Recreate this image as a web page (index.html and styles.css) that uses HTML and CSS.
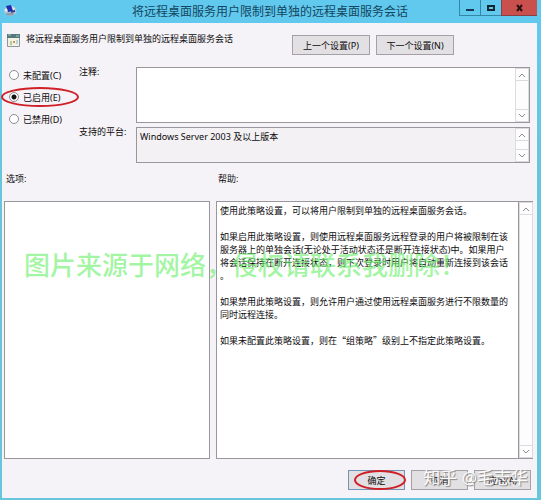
FILE: index.html
```html
<!DOCTYPE html>
<html lang="zh-CN">
<head>
<meta charset="utf-8">
<title>将远程桌面服务用户限制到单独的远程桌面服务会话</title>
<link rel="stylesheet" href="styles.css">
</head>
<body>
<main class="window">
  <header class="titlebar">
    <svg class="app-icon" viewBox="0 0 14 14" aria-hidden="true">
      <ellipse cx="7.500" cy="8" rx="6" ry="5" fill="#b4c6d2"/>
      <path d="M3 3l5-1 2 6-5 1z" fill="#1c2fae"/>
      <path d="M8 8l4-1v2l-4 1z" fill="#2b3f9e"/>
      <path d="M9 3l3 3-2 1z" fill="#e9f0f6"/>
      <ellipse cx="7" cy="11" rx="4" ry="1.500" fill="#8b9fae"/>
      <circle cx="3" cy="7" r="1.500" fill="#e8eef2"/>
    </svg>
    <h1 class="title">将远程桌面服务用户限制到单独的远程桌面服务会话</h1>
    <div class="caption-buttons">
      <button class="caption" aria-label="最小化"><svg viewBox="0 0 8 8"><path d="M0 6h8" stroke="#14384c" stroke-width="2"/></svg></button>
      <button class="caption" aria-label="最大化"><svg viewBox="0 0 8 8"><path d="M1 2h6v4H1z" fill="none" stroke="#102633" stroke-width="2"/></svg></button>
      <button class="caption close" aria-label="关闭"><svg viewBox="0 0 8 8"><path d="M1 1l5 6M6 1L1 7" stroke="#2b1013" stroke-width="2"/></svg></button>
    </div>
  </header>

  <div class="content">
    <section class="heading">
      <svg class="policy-icon" viewBox="0 0 13 13" aria-hidden="true">
        <path d="M.5.500h12v12H.5z" fill="#f2f1e4" stroke="#8b9a98"/>
        <path d="M0 0h13v4H0z" fill="#55787c"/>
        <path d="M1 1h3M9 2h3" stroke="#a8c9bd"/>
        <path d="M3 8h2M3 10h2" stroke="#7aa35b" stroke-width="1"/>
        <path d="M6 7h2v2H6z" fill="#c99a55"/>
        <path d="M9 6h2v4H9z" fill="#b9d4d9"/>
      </svg>
      <h2 class="policy-name">将远程桌面服务用户限制到单独的远程桌面服务会话</h2>
      <div class="nav">
        <button class="button">上一个设置(P)</button>
        <button class="button">下一个设置(N)</button>
      </div>
    </section>

    <section class="settings">
      <div class="states">
        <label class="state"><input type="radio" name="state">未配置(C)</label>
        <label class="state"><input type="radio" name="state" checked>已启用(E)
          <svg class="ring ring-state" viewBox="0 0 78 20" aria-hidden="true"><ellipse cx="39" cy="10" rx="38" ry="9"/></svg>
        </label>
        <label class="state"><input type="radio" name="state">已禁用(D)</label>
      </div>
      <label class="field-label" for="comment">注释:</label>
      <div class="box comment">
        <textarea id="comment"></textarea>
        <div class="scroll"><button aria-label="向上"><svg viewBox="0 0 6 4"><path d="M0 4l3-3 3 3"/></svg></button><button aria-label="向下"><svg viewBox="0 0 6 4"><path d="M0 0l3 3 3-3"/></svg></button></div>
      </div>
      <label class="field-label" for="platform">支持的平台:</label>
      <div class="box platform">
        <textarea id="platform" readonly>Windows Server 2003 及以上版本</textarea>
        <div class="scroll"><button aria-label="向上"><svg viewBox="0 0 6 4"><path d="M0 4l3-3 3 3"/></svg></button><button aria-label="向下"><svg viewBox="0 0 6 4"><path d="M0 0l3 3 3-3"/></svg></button></div>
      </div>
    </section>

    <section class="panels">
      <h3 class="panel-label">选项:</h3>
      <h3 class="panel-label">帮助:</h3>
      <div class="box options"></div>
      <div class="box help">
        <div class="help-text">
          <p>使用此策略设置，可以将用户限制到单独的远程桌面服务会话。</p>
          <p>如果启用此策略设置，则使用远程桌面服务远程登录的用户将被限制在该<br>服务器上的单独会话(无论处于活动状态还是断开连接状态)中。如果用户<br>将会话保持在断开连接状态，则下次登录时用户将自动重新连接到该会话<br>。</p>
          <p>如果禁用此策略设置，则允许用户通过使用远程桌面服务进行不限数量的<br>同时远程连接。</p>
          <p>如果未配置此策略设置，则在<span class="wide">“组策略”</span>级别上不指定此策略设置。</p>
        </div>
        <div class="scroll"><button aria-label="向上"><svg viewBox="0 0 6 4"><path d="M0 4l3-3 3 3"/></svg></button><button aria-label="向下"><svg viewBox="0 0 6 4"><path d="M0 0l3 3 3-3"/></svg></button></div>
      </div>
    </section>

    <footer class="actions">
      <button class="button default">确定
        <svg class="ring ring-ok" viewBox="0 0 52 20" aria-hidden="true"><ellipse cx="26" cy="10" rx="25" ry="9"/></svg>
      </button>
      <button class="button">取消</button>
      <button class="button">应用(A)</button>
    </footer>
  </div>
  <div class="source-mark">图片来源于网络，侵权请联系我删除！</div>
  <div class="author-mark">知乎 @毛志华</div>
</main>
</body>
</html>
```
FILE: styles.css
```css
* { box-sizing: border-box; }

body {
  margin: 0;
  font: 9px/13px "Noto Sans", "Noto Sans CJK SC", sans-serif;
  color: #0c0a0c;
}

h1, h2, h3, p { margin: 0; font-size: inherit; font-weight: 400; }

button, textarea { font: inherit; color: inherit; }

.window {
  position: relative;
  display: flex;
  flex-direction: column;
  min-height: 100vh;
  padding: 0 4px 2px 2px;
  background: linear-gradient(#62c9ee 24px, #66c6dc 160px);
}

.titlebar {
  display: flex;
  align-items: flex-start;
  height: 23px;
}

.app-icon { width: 14px; height: 14px; margin: 3px 0 0 1px; }

.title {
  flex: 1;
  margin-left: 64px;
  font-size: 12px;
  line-height: 23px;
  text-align: center;
  white-space: nowrap;
  color: #12465e;
}

.caption-buttons { display: flex; }

.caption {
  display: grid;
  place-items: center;
  width: 21px;
  height: 16px;
  padding: 0;
  border: 1px solid #3587a5;
  border-width: 0 0 1px 1px;
  background: transparent;
}

.caption svg { width: 8px; height: 8px; }

.caption.close { width: 36px; border-color: #8c4046; background: #c9504d; }

.content {
  flex: 1;
  display: flex;
  flex-direction: column;
  padding: 11px 6px 8px 3px;
  background: #f5f3f7;
}

.heading { display: flex; align-items: flex-start; height: 33px; }

.policy-icon { width: 13px; height: 13px; margin-left: 2px; }

.policy-name { margin-left: 6px; line-height: 9px; }

.nav { display: flex; gap: 6px; margin: 1px 77px 0 auto; }

.button {
  position: relative;
  min-width: 78px;
  height: 20px;
  padding: 0 6px;
  border: 1px solid #a3a1a5;
  background: #e2e0e2;
  white-space: nowrap;
}

.settings {
  display: grid;
  grid-template-columns: 74px 57px 1fr;
  grid-template-rows: 56px 36px;
  row-gap: 4px;
  margin-right: 1px;
}

.states {
  grid-row: span 2;
  display: flex;
  flex-direction: column;
  gap: 2px;
  margin: -2px 0 0 4px;
}

.state { position: relative; display: flex; align-items: center; gap: 4px; height: 20px; }

.state input {
  appearance: none;
  width: 10px;
  height: 10px;
  margin: 0;
  border: 1px solid #8e8c90;
  border-radius: 50%;
  background: #fff;
}

.state input:checked { background: radial-gradient(circle, #111 2px, #fff 3px); }

.ring { position: absolute; fill: none; stroke: #cf2028; stroke-width: 2; }

.ring-state { width: 78px; height: 20px; left: -8px; top: 0; }

.ring-ok { width: 52px; height: 20px; left: 5px; top: -1px; }

.field-label { line-height: 10px; }

.box { display: flex; border: 1px solid #99979b; background: #fff; min-width: 0; }

.box textarea {
  flex: 1;
  min-width: 0;
  padding: 2px 3px;
  border: 0;
  outline: 0;
  resize: none;
  overflow: hidden;
  background: transparent;
}

.box.platform { background: #f3f1f4; }

.scroll {
  display: flex;
  flex-direction: column;
  justify-content: space-between;
  width: 14px;
  border: 1px solid #dddbdf;
  background: #fdfdfe;
}

.scroll button {
  display: grid;
  place-items: center;
  height: 12px;
  padding: 0;
  border: 0;
  border-bottom: 1px solid #dddbdf;
  background: transparent;
}

.scroll button:last-child { border-top: 1px solid #dddbdf; border-bottom: 0; }

.scroll svg { width: 6px; height: 4px; fill: none; stroke: #8d8b8f; }

.panels {
  flex: 1;
  display: grid;
  grid-template-columns: 206fr 317fr;
  grid-template-rows: 28px 1fr;
  column-gap: 6px;
  margin: 10px -2px 11px -1px;
}

.panel-label { margin-left: 2px; line-height: 12px; }

.help-text {
  flex: 1;
  min-width: 0;
  padding: 2px 3px;
  border-right: 1px solid #99979b;
}

.box.help { border-right: 0; }

.help-text p { margin-bottom: 13px; white-space: nowrap; }

.wide { font-family: "Noto Sans CJK SC", sans-serif; }

.actions { display: flex; justify-content: flex-end; gap: 6px; }

.actions .button { min-width: 57px; }

.actions .default { border-color: #7295b5; }

.source-mark {
  position: absolute;
  left: 24px;
  top: 247px;
  font-size: 26px;
  font-weight: 500;
  line-height: 36px;
  white-space: nowrap;
  color: #6df06da0;
  pointer-events: none;
}

.author-mark {
  position: absolute;
  right: 13px;
  bottom: 10px;
  font-size: 17px;
  line-height: 24px;
  white-space: nowrap;
  color: #fffffff0;
  text-shadow: 1px 1px 1px #888;
  pointer-events: none;
}
```
